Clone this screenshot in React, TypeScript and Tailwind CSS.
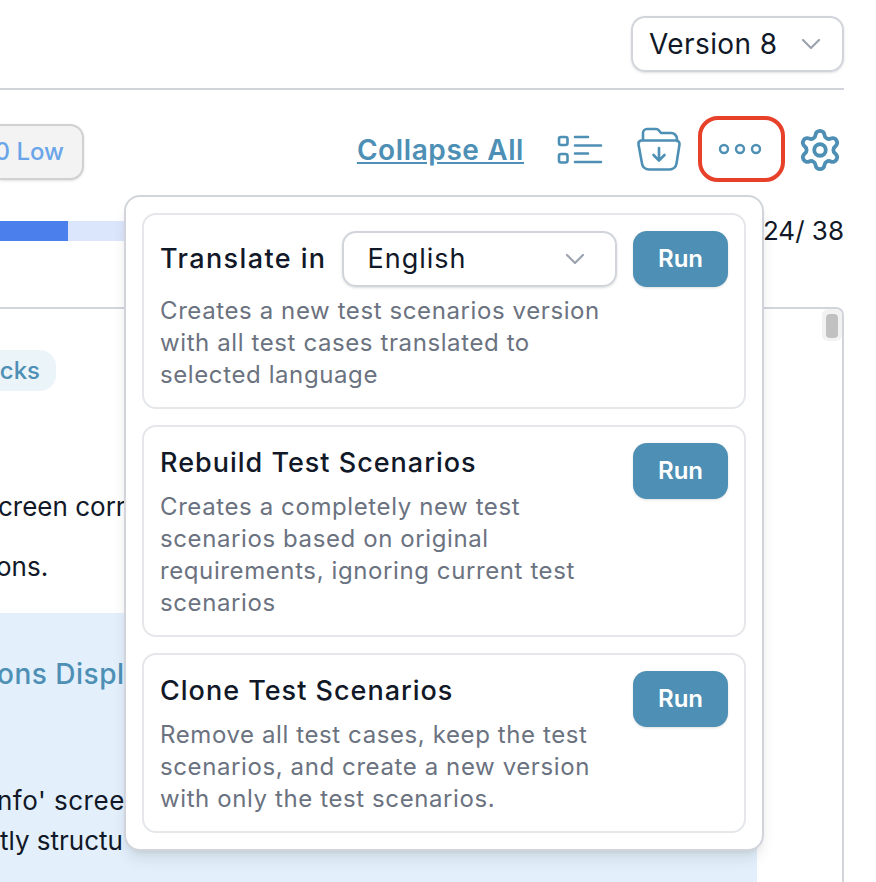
import { Settings } from "lucide-react";

const font = "font-['Inter','Liberation_Sans',sans-serif]";

function Chevron() {
  return (
    <svg width="20" height="12" viewBox="0 0 20 12" fill="none" stroke="#9ca3af" strokeWidth="2.2" strokeLinecap="round" strokeLinejoin="round">
      <path d="M2 2l8 8 8-8" />
    </svg>
  );
}

function Run() {
  return (
    <button className="w-[95px] h-[56px] shrink-0 rounded-[14px] bg-[#4d8fb5] text-white text-[24px] font-semibold shadow-sm">
      Run
    </button>
  );
}

function ListIcon() {
  return (
    <svg width="46" height="30" viewBox="0 0 46 30" fill="none" stroke="#4d8fb5" strokeWidth="2.6" strokeLinecap="round">
      <rect x="2" y="2" width="8.5" height="8" rx="2" />
      <rect x="2" y="19" width="8.5" height="8.5" rx="2" />
      <path d="M18 2h13M18 10.500h26M18 18.500h13M18 27h26" />
    </svg>
  );
}

function FolderIcon() {
  return (
    <svg width="46" height="46" viewBox="0 0 46 46" fill="none" stroke="#4d8fb5" strokeWidth="2.6" strokeLinecap="round" strokeLinejoin="round">
      <path d="M7 13V6a4 4 0 0 1 4-4h9a4 4 0 0 1 3 1.500l2 2.500h10a6 6 0 0 1 6 6v2" />
      <path d="M5 13.500h35a3.500 3.500 0 0 1 3.500 4l-3 19a7 7 0 0 1-7 6H13a7 7 0 0 1-7-6l-3.500-19a3.500 3.500 0 0 1 2.500-4z" />
      <path d="M23 21v12M17.500 28l5.500 5.500 5.500-5.500" />
    </svg>
  );
}

function DotsIcon() {
  return (
    <svg width="48" height="14" viewBox="0 0 48 14" fill="none" stroke="#4d8fb5" strokeWidth="2.4">
      <circle cx="8" cy="7" r="4" />
      <circle cx="24" cy="7" r="4" />
      <circle cx="40" cy="7" r="4" />
    </svg>
  );
}

function Card({ children }: { children: React.ReactNode }) {
  return <div className="flex gap-4 rounded-[14px] border-2 border-[#e5e7eb] p-4">{children}</div>;
}

function Desc({ children }: { children: React.ReactNode }) {
  return <p className="mt-2 text-[24px] leading-8 tracking-[0.6px] text-[#6b7280]">{children}</p>;
}

function Title({ children }: { children: React.ReactNode }) {
  return <h3 className="h-10 whitespace-nowrap text-[27px] leading-10 font-medium tracking-[1px] text-[#111827]">{children}</h3>;
}

export default function App() {
  return (
    <div className={`${font} relative w-[876px] h-[882px] overflow-hidden bg-white pr-8 text-[#111827]`}>
      <div className="flex h-[90px] justify-end border-b-2 border-[#d1d5db] pt-4">
        <div className="flex h-[56px] w-[213px] items-center justify-between rounded-[14px] border-2 border-[#d1d5db] pl-4 pr-[21px] shadow-sm">
          <span className="text-[28px] tracking-[0.4px]">Version 8</span>
          <Chevron />
        </div>
      </div>

      <div className="flex h-[100px] items-center justify-between pt-[20px]">
        <div className="mt-[4px] flex h-[56px] w-[84px] items-center justify-end whitespace-nowrap rounded-r-[14px] border-2 border-l-0 border-[#d1d1d1] bg-[#f3f3f3] pr-[18px] text-[24px] font-medium text-[#6aa5ea] shadow-sm">
          0 Low
        </div>
        <div className="flex items-center">
          <a className="mr-[33px] text-[28px] font-semibold tracking-[0.6px] text-[#4d8fb5] underline">Collapse All</a>
          <span className="mr-[33px]"><ListIcon /></span>
          <span className="mr-[16px]"><FolderIcon /></span>
          <div className="mb-[2px] mr-[12px] flex h-[66px] w-[87px] items-center justify-center rounded-[20px] border-4 border-[#e8412a] pr-1">
            <DotsIcon />
          </div>
          <Settings size={46} strokeWidth={2} className="mr-[1px] text-[#4d8fb5]" />
        </div>
      </div>

      <div className="mt-[18px] flex h-[82px] items-center justify-between pb-[38px]">
        <div className="flex h-5 w-[745px] translate-y-px">
          <div className="w-[68px] bg-[#4a7fec]" />
          <div className="flex-1 bg-[#dbe6fc]" />
        </div>
        <span className="text-[26px]">24/ 38</span>
      </div>

      <div className="relative mt-[17px] h-[580px] rounded-tr-lg border-t-2 border-r-2 border-[#d1d5db] pr-[85px] pt-[41px]">
        <div className="flex h-[41px] w-[56px] items-center justify-end rounded-r-2xl bg-[#ebf4f8] pr-4 text-[24px] font-medium text-[#4d8fb5]">
          cks
        </div>
        <p className="mt-[96px] -ml-[2px] h-[40px] whitespace-nowrap text-[26px] leading-10">creen corr</p>
        <p className="mt-5 -ml-[4px] h-[40px] text-[26px] leading-10">ons.</p>
        <div className="mt-[26px] h-[290px] bg-[#e3f0fb] pt-[41px]">
          <p className="-ml-[3px] h-10 whitespace-nowrap text-[28px] font-medium leading-10 tracking-[0.5px] text-[#4d8fb5]">ons Displ</p>
          <p className="mt-[87px] -ml-[3px] whitespace-nowrap text-[26px] leading-10 tracking-[0.5px]">nfo' scree</p>
          <p className="whitespace-nowrap text-[26px] leading-10">tly structu</p>
        </div>
        <div className="absolute right-0 top-0 h-[32px] w-[20px] rounded-md bg-[#f2f2f2] px-1 pt-[5px]">
          <div className="h-[24px] rounded bg-[#c1c1c1]" />
        </div>
      </div>

      <div className="absolute left-[124px] top-[195px] flex w-[640px] flex-col gap-4 rounded-2xl border-2 border-[#d1d5db] bg-white p-4 shadow-lg">
        <Card>
          <div className="flex-1">
            <div className="flex items-center gap-[15px]">
              <span className="whitespace-nowrap text-[27px] font-medium tracking-[1.4px]">Translate in</span>
              <div className="flex h-[56px] flex-1 items-center justify-between rounded-[14px] border-2 border-[#d1d5db] pl-6 pr-[30px] shadow-sm">
                <span className="text-[27px] tracking-[1px]">English</span>
                <Chevron />
              </div>
            </div>
            <Desc>Creates a new test scenarios version with all test cases translated to selected language</Desc>
          </div>
          <Run />
        </Card>
        <Card>
          <div className="flex-1">
            <Title>Rebuild Test Scenarios</Title>
            <Desc>Creates a completely new test scenarios based on original requirements, ignoring current test scenarios</Desc>
          </div>
          <Run />
        </Card>
        <Card>
          <div className="flex-1">
            <Title>Clone Test Scenarios</Title>
            <Desc>Remove all test cases, keep the test scenarios, and create a new version with only the test scenarios.</Desc>
          </div>
          <Run />
        </Card>
      </div>
    </div>
  );
}
